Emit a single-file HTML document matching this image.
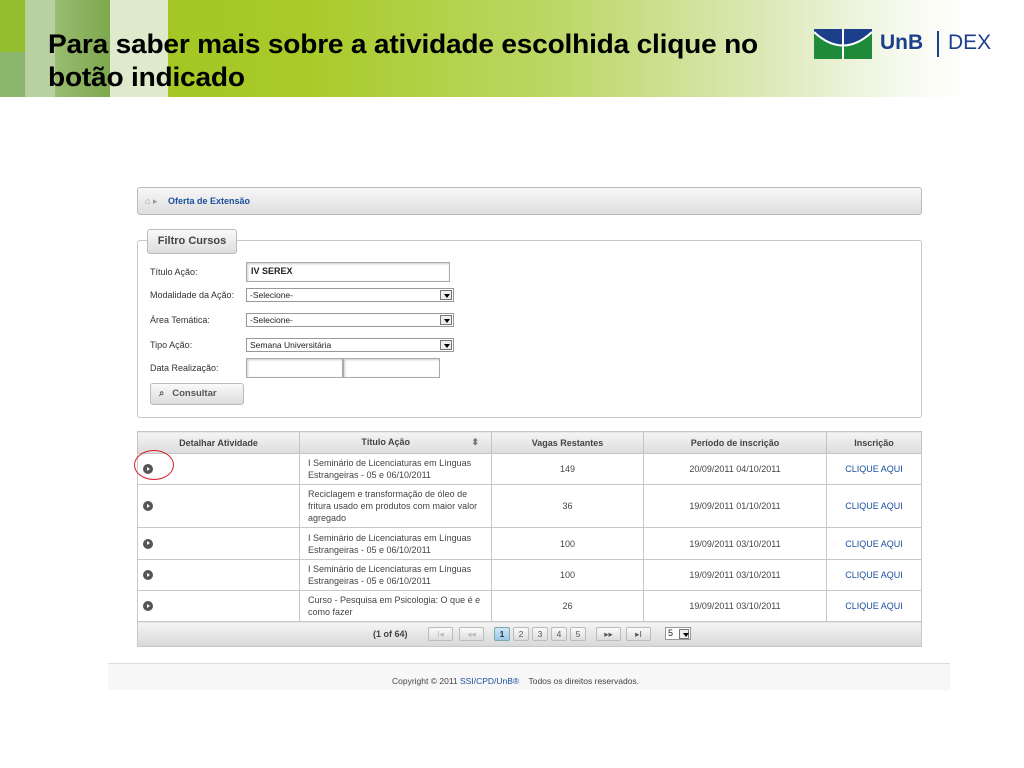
<!DOCTYPE html>
<html><head><meta charset="utf-8"><style>
*{margin:0;padding:0;box-sizing:border-box}
body{width:1024px;height:768px;background:#fff;font-family:"Liberation Sans",Arial,sans-serif;position:relative;overflow:hidden}
.hdr{position:absolute;left:0;top:0;width:1024px;height:97px;background:linear-gradient(90deg,#9cc21a 0%,#a8cb2a 30%,#bcd868 55%,#dce9b8 75%,#f6f9ee 88%,#fff 95%)}
.s{position:absolute}
h1{position:absolute;left:48px;top:28px;font-size:27px;line-height:33px;font-weight:bold;color:#000;letter-spacing:-0.2px;width:770px;transform:scaleX(1.04);transform-origin:left top}
.abs{position:absolute}
.t{font-size:9px;color:#333}
.box{position:absolute;border:1px solid #c8c8c8;border-radius:3px}
.inp{position:absolute;border:1px solid #aaa;background:#fff;height:18px;font-size:9px;padding:3px 4px;color:#222;box-shadow:inset 1px 1px 2px #ccc}
.sel{position:absolute;border:1px solid #999;background:#fff;height:14px;font-size:8.5px;padding:1px 3px;color:#222}
.sel b{position:absolute;right:1px;top:1px;width:12px;height:10px;border:1px solid #777;background:#eee}
.sel b:after{content:"";position:absolute;left:3px;top:3px;border:3px solid transparent;border-top:4px solid #000}
table{position:absolute;left:137px;top:431px;width:785px;border-collapse:collapse;font-size:9px;color:#444;table-layout:fixed}
th{height:22px;background:linear-gradient(#f4f4f4,#dcdcdc);border:1px solid #c4c4c4;font-weight:bold;color:#444;font-size:9px}
td{border:1px solid #c8c8c8;text-align:center;line-height:12px}
td.l{text-align:left;padding:0 8px}
td.c{color:#1a4f9c}
.pl{display:inline-block;width:10px;height:10px;border-radius:50%;background:#555;position:relative;margin-left:5px;float:left}
.pl:after{content:"";position:absolute;left:4px;top:2.5px;border-left:3px solid #fff;border-top:2.5px solid transparent;border-bottom:2.5px solid transparent}
.pg{position:absolute;top:627px;height:14px;border:1px solid #bbb;background:linear-gradient(#fafafa,#ddd);font-size:8.5px;text-align:center;line-height:12px;color:#555;border-radius:2px}
</style></head><body>
<div class="hdr"></div>
<div class="s" style="left:0;top:0;width:25px;height:52px;background:#93bd2c"></div>
<div class="s" style="left:0;top:52px;width:25px;height:45px;background:#8bb56c"></div>
<div class="s" style="left:25px;top:0;width:30px;height:97px;background:#b9d0a0"></div>
<div class="s" style="left:55px;top:0;width:55px;height:97px;background:linear-gradient(90deg,#98bc70,#7ea84e)"></div>
<div class="s" style="left:110px;top:0;width:58px;height:97px;background:#dfe9cc"></div>
<h1>Para saber mais sobre a atividade escolhida clique no<br>botão indicado</h1>
<svg class="abs" style="left:814px;top:29px" width="60" height="30" viewBox="0 0 60 30"><rect x="0" y="0" width="58" height="30" fill="#1f8a3a"/><path d="M0 0H58V3Q29 30 0 3Z" fill="#1c3f8c"/><path d="M0 3Q29 30 58 3" stroke="#fff" stroke-width="2" fill="none"/><rect x="28" y="0" width="2" height="30" fill="#fff"/></svg>
<div class="abs" style="left:880px;top:31px;font-size:21px;font-weight:bold;color:#1c3f8c">UnB</div>
<div class="abs" style="left:937px;top:31px;width:1.5px;height:26px;background:#1c3f8c"></div>
<div class="abs" style="left:948px;top:31px;font-size:21px;color:#1c3f8c">DEX</div>

<div class="box" style="left:137px;top:187px;width:785px;height:28px;background:linear-gradient(#f8f8f8,#dedede);border-color:#bbb"></div>
<div class="abs t" style="left:145px;top:196px;color:#999">⌂ ▸</div>
<div class="abs" style="left:168px;top:196px;font-size:9px;font-weight:bold;color:#1a4f9c">Oferta de Extensão</div>

<div class="box" style="left:137px;top:240px;width:785px;height:178px"></div>
<div class="box" style="left:147px;top:229px;width:90px;height:25px;background:linear-gradient(#fafafa,#dcdcdc);border-color:#bbb;font-size:11px;font-weight:bold;color:#444;text-align:center;line-height:23px">Filtro Cursos</div>
<div class="abs t" style="left:150px;top:267px">Título Ação:</div>
<div class="abs t" style="left:150px;top:290px">Modalidade da Ação:</div>
<div class="abs t" style="left:150px;top:315px">Área Temática:</div>
<div class="abs t" style="left:150px;top:340px">Tipo Ação:</div>
<div class="abs t" style="left:150px;top:363px">Data Realização:</div>
<div class="inp" style="left:246px;top:262px;width:204px;height:20px;font-weight:bold">IV SEREX</div>
<div class="sel" style="left:246px;top:288px;width:208px">-Selecione-<b></b></div>
<div class="sel" style="left:246px;top:313px;width:208px">-Selecione-<b></b></div>
<div class="sel" style="left:246px;top:338px;width:208px">Semana Universitária<b></b></div>
<div class="inp" style="left:246px;top:358px;width:97px;height:20px"></div>
<div class="inp" style="left:343px;top:358px;width:97px;height:20px"></div>
<div class="box" style="left:150px;top:383px;width:94px;height:22px;background:linear-gradient(#fafafa,#dcdcdc);border-color:#bbb;font-size:9.5px;font-weight:bold;color:#555;line-height:20px;padding-left:8px">⌕ &nbsp;&nbsp;Consultar</div>

<table>
<tr><th style="width:162px">Detalhar Atividade</th><th style="width:192px">Título Ação <span style="float:right;margin-right:12px;color:#777">⬍</span></th><th style="width:152px">Vagas Restantes</th><th style="width:183px">Período de inscrição</th><th>Inscrição</th></tr>
<tr style="height:31px"><td><span class="pl"></span></td><td class="l">I Seminário de Licenciaturas em Línguas Estrangeiras - 05 e 06/10/2011</td><td>149</td><td>20/09/2011 04/10/2011</td><td class="c">CLIQUE AQUI</td></tr>
<tr style="height:43px"><td><span class="pl"></span></td><td class="l">Reciclagem e transformação de óleo de<br>fritura usado em produtos com maior valor<br>agregado</td><td>36</td><td>19/09/2011 01/10/2011</td><td class="c">CLIQUE AQUI</td></tr>
<tr style="height:32px"><td><span class="pl"></span></td><td class="l">I Seminário de Licenciaturas em Línguas Estrangeiras - 05 e 06/10/2011</td><td>100</td><td>19/09/2011 03/10/2011</td><td class="c">CLIQUE AQUI</td></tr>
<tr style="height:31px"><td><span class="pl"></span></td><td class="l">I Seminário de Licenciaturas em Línguas Estrangeiras - 05 e 06/10/2011</td><td>100</td><td>19/09/2011 03/10/2011</td><td class="c">CLIQUE AQUI</td></tr>
<tr style="height:31px"><td><span class="pl"></span></td><td class="l">Curso - Pesquisa em Psicologia: O que é e como fazer</td><td>26</td><td>19/09/2011 03/10/2011</td><td class="c">CLIQUE AQUI</td></tr>
<tr style="height:25px"><td colspan="5" style="background:linear-gradient(#f4f4f4,#d8d8d8)"></td></tr>
</table>
<div class="abs" style="left:134px;top:450px;width:40px;height:30px;border:1px solid #d42030;border-radius:50%"></div>
<div class="abs" style="left:373px;top:629px;font-size:9px;font-weight:bold;color:#444">(1 of 64)</div>
<div class="pg" style="left:428px;width:25px;color:#bbb">I◂</div>
<div class="pg" style="left:459px;width:25px;color:#bbb">◂◂</div>
<div class="pg" style="left:494px;width:16px;background:linear-gradient(#cfe6f5,#9cc8e8);border-color:#7aa;color:#234;font-weight:bold">1</div>
<div class="pg" style="left:513px;width:16px">2</div>
<div class="pg" style="left:532px;width:16px">3</div>
<div class="pg" style="left:551px;width:16px">4</div>
<div class="pg" style="left:570px;width:16px">5</div>
<div class="pg" style="left:596px;width:25px">▸▸</div>
<div class="pg" style="left:626px;width:25px">▸I</div>
<div class="sel" style="left:665px;top:627px;width:26px;height:13px;font-size:9px;padding:0 2px">5<b style="width:10px"></b></div>

<div class="abs" style="left:108px;top:663px;width:842px;height:27px;background:#f7f7f7;border-top:1px solid #ddd"></div>
<div class="abs" style="left:392px;top:676px;font-size:8.5px;color:#444">Copyright © 2011 <span style="color:#1a4f9c">SSI/CPD/UnB®</span> &nbsp;&nbsp; Todos os direitos reservados.</div>
</body></html>
